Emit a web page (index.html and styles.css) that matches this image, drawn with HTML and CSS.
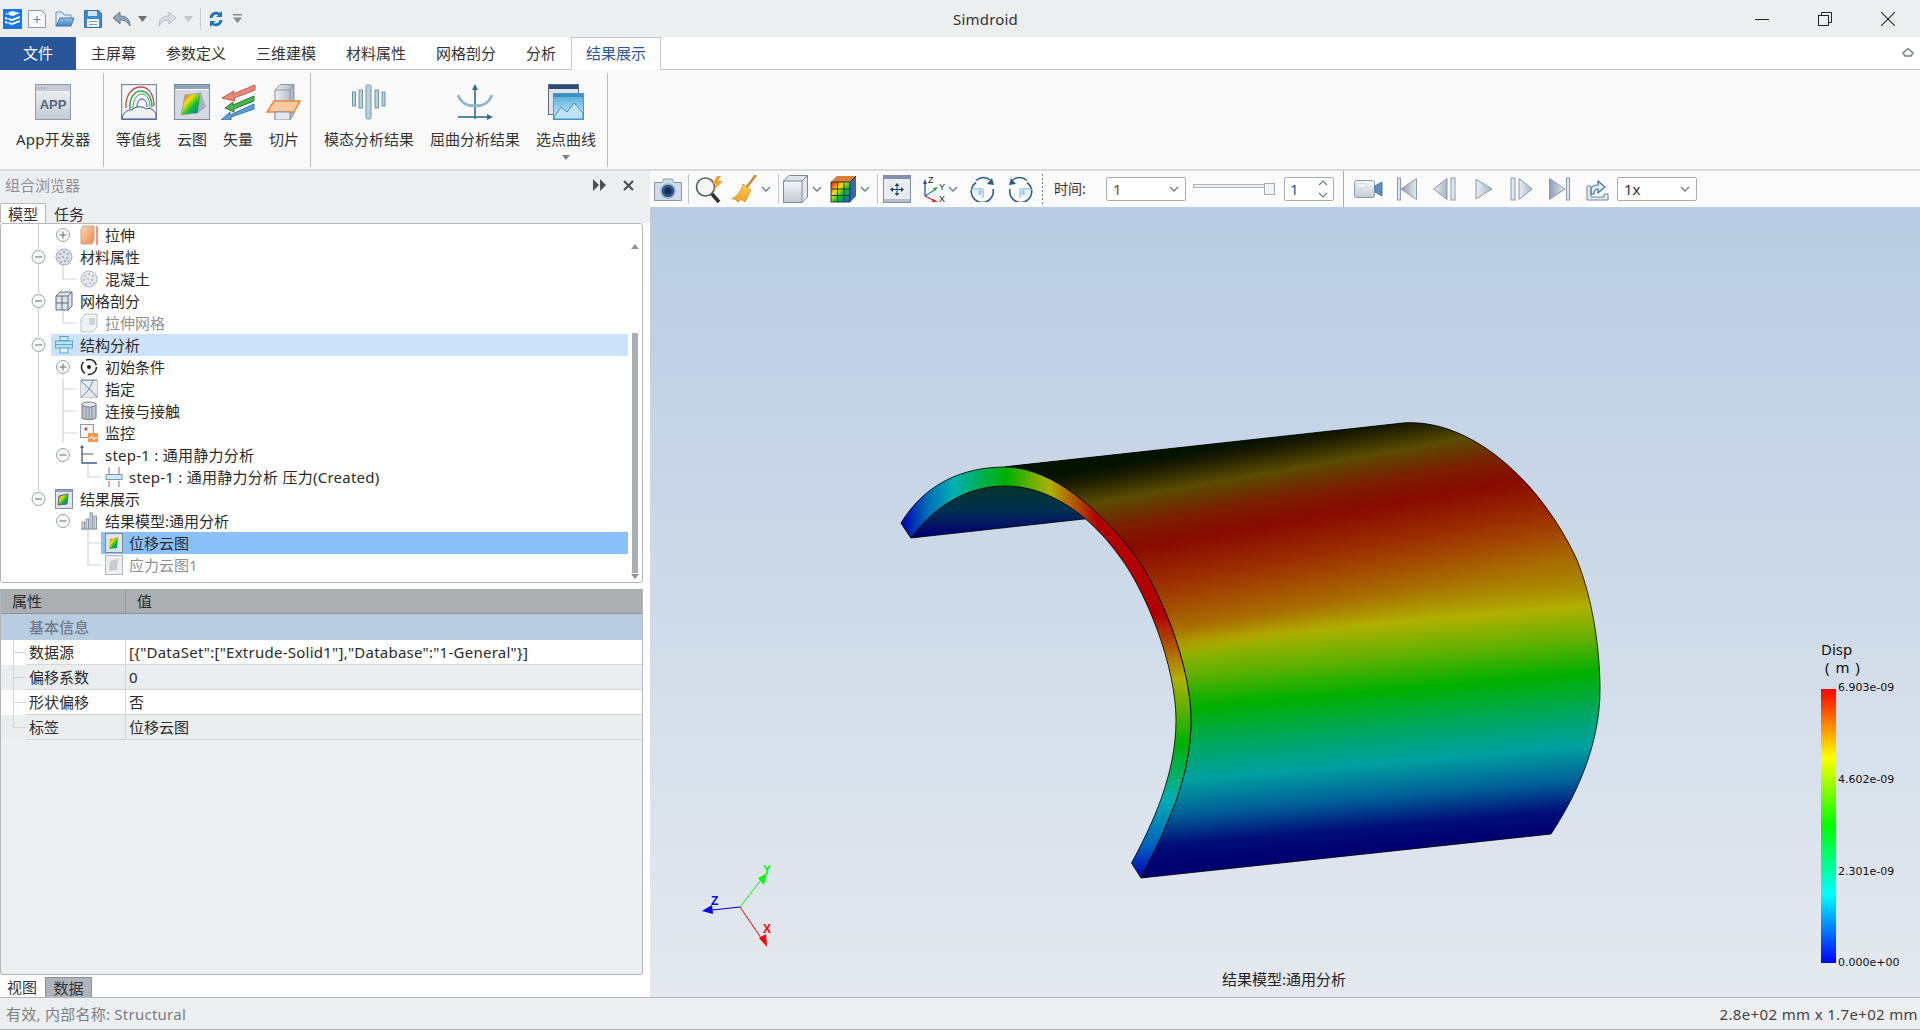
FILE: index.html
```html
<!DOCTYPE html>
<html lang="zh">
<head>
<meta charset="utf-8">
<title>Simdroid</title>
<link rel="stylesheet" href="styles.css">
</head>
<body>
<svg class="defs" width="0" height="0">
  <defs>
    <linearGradient id="gGray" x1="0" y1="0" x2="0" y2="1"><stop offset="0" stop-color="#f4f6f8"/><stop offset="1" stop-color="#c4cad3"/></linearGradient>
    <linearGradient id="gSide" x1="0" y1="0" x2="1" y2="0"><stop offset="0" stop-color="#eef0f3"/><stop offset="1" stop-color="#aab2be"/></linearGradient>
    <linearGradient id="gMedia" x1="0" y1="0" x2="1" y2="0"><stop offset="0" stop-color="#e8edf3"/><stop offset="1" stop-color="#a9b5c4"/></linearGradient>
    <linearGradient id="gMediaR" x1="0" y1="0" x2="1" y2="0"><stop offset="0" stop-color="#8f9db0"/><stop offset="1" stop-color="#e5eaf0"/></linearGradient>
    <linearGradient id="gHeat" x1="0" y1="0" x2="1" y2="1"><stop offset="0" stop-color="#f01010"/><stop offset=".35" stop-color="#f0e010"/><stop offset=".6" stop-color="#10c030"/><stop offset="1" stop-color="#1050e0"/></linearGradient>
    <linearGradient id="gOrange" x1="0" y1="0" x2="1" y2="1"><stop offset="0" stop-color="#fbd9b8"/><stop offset="1" stop-color="#e98c4a"/></linearGradient>
    <linearGradient id="gBlueWin" x1="0" y1="0" x2="0" y2="1"><stop offset="0" stop-color="#4aa8dc"/><stop offset="1" stop-color="#d8eef8"/></linearGradient>
    <linearGradient id="gFolder" x1="0" y1="0" x2="0" y2="1"><stop offset="0" stop-color="#9cc4e8"/><stop offset="1" stop-color="#3f82bd"/></linearGradient>
    <linearGradient id="gBroom" x1="0" y1="0" x2="0" y2="1"><stop offset="0" stop-color="#f9d060"/><stop offset="1" stop-color="#f0a020"/></linearGradient>
  </defs>
</svg>

<header class="titlebar">
  <div class="quick">
    <svg class="ml3" width="19" height="20" viewBox="0 0 19 20"><rect width="19" height="20" fill="#1677e8"/><path d="M2 5 9 2l8 2-7 3zM2 8l7 2 8-3v2l-8 3-7-2zM2 12l7 2 8-3v2l-8 3-7-2z" fill="#fff"/><path d="M5 4v12" stroke="#1677e8"/></svg>
    <svg class="ml6" width="18" height="18" viewBox="0 0 18 18"><path d="M.5.5h13l4 4v13H.5z" fill="#f7f8fa" stroke="#8b99ac"/><path d="M9 6v7M5.5 9.500h7" stroke="#6d7c90"/></svg>
    <svg class="ml9" width="20" height="16" viewBox="0 0 20 16"><path d="M1 15V1h6l2 3h7v3" fill="#dfe9f3" stroke="#6f93b5"/><path d="M1 15 5 7h14l-3 8z" fill="url(#gFolder)" stroke="#3c78ad"/></svg>
    <svg class="ml9" width="18" height="18" viewBox="0 0 18 18"><path d="M.5.5h14l3 3v14H.5z" fill="#3e8ccf" stroke="#2f73ae"/><rect x="4" y="1" width="9" height="5" fill="#cfe3f4"/><rect x="3" y="9" width="12" height="8" fill="#eef3f8"/><path d="M5 11.500h8M5 14.500h8" stroke="#7d9cb9"/></svg>
    <svg class="ml10" width="19" height="16" viewBox="0 0 19 16"><path d="M8 1 1 7l7 6V9c4 0 7 1 10 6 0-6-3-10-10-10z" fill="#93a3b7" stroke="#6a7b90"/></svg>
    <svg class="ml7" width="9" height="6" viewBox="0 0 9 6"><path d="M0 0h9L4.500 6z" fill="#6b6f74"/></svg>
    <svg class="ml11" width="19" height="16" viewBox="0 0 19 16"><path d="M11 1l7 6-7 6V9C7 9 4 10 1 15c0-6 3-10 10-10z" fill="#dde1e6" stroke="#b4bac2"/></svg>
    <svg class="ml7" width="9" height="6" viewBox="0 0 9 6"><path d="M0 0h9L4.500 6z" fill="#c3c6ca"/></svg>
    <i class="qsep"></i>
    <svg class="ml7" width="16" height="18" viewBox="0 0 16 18"><path d="M1.500 8C2 3 7 0 12 3l2-2v6H8l2.500-2C7.500 3.500 5 5 4.500 8z" fill="#1e73b8"/><path d="M14.500 10C14 15 9 18 4 15l-2 2v-6h6l-2.500 2c3 1.500 5.500 0 6-3z" fill="#1e73b8"/></svg>
    <svg class="ml9" width="9" height="9" viewBox="0 0 9 9"><path d="M0 0h9v1.500H0zM0 3.500h9L4.500 9z" fill="#85898e"/></svg>
  </div>
  <div class="apptitle">Simdroid</div>
  <div class="winctl">
    <svg width="14" height="14" viewBox="0 0 14 14"><path d="M0 7.500h14" stroke="#222"/></svg>
    <svg width="14" height="14" viewBox="0 0 14 14"><rect x=".5" y="3.500" width="10" height="10" fill="none" stroke="#222"/><path d="M3.500 3.500V.5h10v10h-3" fill="none" stroke="#222"/></svg>
    <svg width="14" height="14" viewBox="0 0 14 14"><path d="M0 0 14 14M14 0 0 14" stroke="#222" stroke-width="1.100"/></svg>
  </div>
</header>

<nav class="tabs">
  <div class="tab file">文件</div>
  <div class="tab">主屏幕</div>
  <div class="tab">参数定义</div>
  <div class="tab">三维建模</div>
  <div class="tab">材料属性</div>
  <div class="tab">网格剖分</div>
  <div class="tab">分析</div>
  <div class="tab active">结果展示</div>
  <svg class="collapse" width="12" height="9" viewBox="0 0 12 9"><path d="M6 .8 11 5 9 8H3L1 5z" fill="none" stroke="#7b8088" stroke-width="1.500"/></svg>
</nav>

<section class="ribbon">
  <div class="rgroup g1">
    <div class="ritem">
      <svg width="36" height="36" viewBox="0 0 36 36"><rect x=".5" y=".5" width="35" height="35" fill="url(#gGray)" stroke="#8f9aa9"/><rect x="1" y="1" width="34" height="6" fill="#c8cdd5"/><path d="M3 4h1M6 4h1M9 4h1" stroke="#667"/><text class="svgapp" x="18" y="25" text-anchor="middle">APP</text></svg>
      <span class="wide">App开发器</span>
    </div>
  </div>
  <div class="rgroup g2">
    <div class="ritem">
      <svg width="36" height="36" viewBox="0 0 36 36"><rect x=".5" y=".5" width="35" height="35" fill="#dfe3e9" stroke="#7f8b9b"/><rect x="2" y="2" width="32" height="32" fill="#f6f7f9"/><path d="M5 24C4 10 12 3 20 3c8 0 13 8 13 19" fill="none" stroke="#c0504d" stroke-width="1.300"/><path d="M9 25C8 13 14 7 20 7c6 0 11 6 11 16" fill="none" stroke="#3fa34d" stroke-width="1.500"/><path d="M12 25C12 15 16 10 21 10c5 0 8 6 8 14" fill="none" stroke="#3fa34d"/><path d="M16 24c0-6 2-9 5-9s5 3 5 8" fill="none" stroke="#3a45c8"/><path d="M1 35c0-5 5-10 10-9 2-3 10-5 14-1 4-2 8 1 10 5v5z" fill="#eef0f4" stroke="#3a4a90"/></svg>
      <span>等值线</span>
    </div>
    <div class="ritem">
      <svg width="36" height="36" viewBox="0 0 36 36"><rect x=".5" y=".5" width="35" height="35" fill="#d5dae2" stroke="#7f8b9b"/><rect x="1" y="1" width="34" height="4" fill="#8fa3bb"/><rect x="2" y="5" width="32" height="1" fill="#fff"/><path d="M11 11 27 9 24 29 7 31z" fill="url(#gHeat)" stroke="#a0a6b0"/><path d="M27 9l5 14-8 6z" fill="#aab2bd"/></svg>
      <span>云图</span>
    </div>
    <div class="ritem">
      <svg width="36" height="36" viewBox="0 0 36 36"><path d="M2 13 14 6l-1 3 22-9v5L14 13l1 3z" fill="#e8877a" stroke="#c0584c" transform="translate(0 1)"/><path d="M5 24l8-6 0 3 21-9v5L14 25l0 3z" fill="#4caf50" stroke="#2e7d32"/><path d="M1 36l9-8 0 3 24-11v5L11 33l0 3z" fill="#5a9fd8" stroke="#3a75a8"/></svg>
      <span>矢量</span>
    </div>
    <div class="ritem">
      <svg width="36" height="36" viewBox="0 0 36 36"><path d="M9 6 14 .5h14V30l-4 6H9z" fill="url(#gSide)" stroke="#8b95a3"/><path d="M9 6h15v30M24 6l4-5.500" fill="none" stroke="#8b95a3"/><path d="M8 17h26l-6 11H1z" fill="#f5c9a0" stroke="#e08840" stroke-width="1.500"/><rect x="9" y="28" width="15" height="8" fill="#e3e6eb" stroke="#8b95a3"/></svg>
      <span>切片</span>
    </div>
  </div>
  <div class="rgroup g3">
    <div class="ritem">
      <svg width="36" height="36" viewBox="0 0 36 36"><rect x="15" y="1" width="5" height="34" rx="1.500" fill="#bcd0dd" stroke="#6e95ab"/><rect x="8" y="6" width="3.500" height="18" fill="#bcd0dd" stroke="#6e95ab"/><rect x="1.500" y="8" width="3" height="14" fill="#bcd0dd" stroke="#6e95ab"/><rect x="24" y="6" width="3.500" height="18" fill="#bcd0dd" stroke="#6e95ab"/><rect x="31" y="8" width="3" height="14" fill="#bcd0dd" stroke="#6e95ab"/></svg>
      <span>模态分析结果</span>
    </div>
    <div class="ritem">
      <svg width="36" height="36" viewBox="0 0 36 36"><path d="M18 35V4" stroke="#3f7d96" stroke-width="1.800"/><path d="M18 0l-3 6h6z" fill="#2f6f8a"/><path d="M1 33h30" stroke="#3f7d96" stroke-width="1.800"/><path d="M36 33l-6-3v6z" fill="#2f6f8a"/><path d="M1 11c3 8 8 11 17 11s14-3 17-11" fill="none" stroke="#8fb6ca" stroke-width="3"/></svg>
      <span>屈曲分析结果</span>
    </div>
    <div class="ritem">
      <svg width="36" height="36" viewBox="0 0 36 36"><rect x=".5" y=".5" width="30" height="30" fill="#dfe4ea" stroke="#5d6b80"/><rect x="1" y="1" width="29" height="4" fill="#2a4a78"/><rect x="5.500" y="9.500" width="30" height="26" fill="url(#gBlueWin)" stroke="#4b9bc9"/><rect x="6" y="10" width="29" height="3" fill="#3c8fc4"/><path d="M6 33l7-10 6 5 7-9 9 10v6H6z" fill="#bfe2f3" stroke="#3c8fc4"/></svg>
      <span>选点曲线</span>
      <svg class="rcaret" width="8" height="5" viewBox="0 0 8 5"><path d="M0 0h8L4 5z" fill="#7d8288"/></svg>
    </div>
  </div>
</section>

<main class="workspace">
  <aside class="leftcol">
    <div class="dock-title">
      <span>组合浏览器</span>
      <svg class="dock-btn" width="14" height="12" viewBox="0 0 14 12"><path d="M0 0l6 6-6 6zM7 0l6 6-6 6z" fill="#4b5158"/></svg>
      <svg class="dock-btn" width="11" height="11" viewBox="0 0 11 11"><path d="M1 1l9 9M10 1l-9 9" stroke="#4b5158" stroke-width="2.200"/></svg>
    </div>
    <div class="dock-tabs">
      <div class="dtab on">模型</div>
      <div class="dtab">任务</div>
    </div>
    <div class="tree">
      <svg class="tree-lines" width="110" height="356" viewBox="0 0 110 356">
        <g class="tl">
          <path d="M37.500 0v25M37.500 40v29M37.500 84v29M37.500 128v139"/>
          <path d="M62 41v14H76M62 85v14H76M62 154v65M62 165h14M62 187h14M62 209h14"/>
          <path d="M87 239v14h13M87 305v36h13M87 319h13"/>
        </g>
        <g class="exp">
          <circle cx="62" cy="11" r="6.500"/><path d="M58.500 11h7M62 7.500v7"/>
          <circle cx="37.500" cy="33" r="6.500"/><path d="M34 33h7"/>
          <circle cx="37.500" cy="77" r="6.500"/><path d="M34 77h7"/>
          <circle cx="37.500" cy="121" r="6.500"/><path d="M34 121h7"/>
          <circle cx="62" cy="143" r="6.500"/><path d="M58.500 143h7M62 139.500v7"/>
          <circle cx="62" cy="231" r="6.500"/><path d="M58.500 231h7"/>
          <circle cx="37.500" cy="275" r="6.500"/><path d="M34 275h7"/>
          <circle cx="62" cy="297" r="6.500"/><path d="M58.500 297h7"/>
        </g>
      </svg>
      <div class="row l2"><div class="node"><svg width="18" height="20" viewBox="0 0 18 20"><path d="M1 5 3 1h11v14l-2 4H1z" fill="url(#gOrange)" stroke="#c9a184"/><path d="M17 20V1" stroke="#d03020"/></svg><span>拉伸</span></div></div>
      <div class="row l1"><div class="node"><svg width="18" height="20" viewBox="0 0 18 20"><circle cx="9" cy="10" r="8" fill="#dde1e7" stroke="#a4abb5"/><path d="M4 7h2M8 5h2M12 7h2M3 11h2M7 10h2M11 11h2M5 15h2M9 14h2M13 14h1" stroke="#aab0ba" stroke-width="2"/></svg><span>材料属性</span></div></div>
      <div class="row l2"><div class="node"><svg width="18" height="20" viewBox="0 0 18 20"><circle cx="9" cy="10" r="8" fill="#e5e8ec" stroke="#b0b6bf"/><path d="M4 7h2M8 5h2M12 7h2M3 11h2M7 10h2M11 11h2M5 15h2M9 14h2M13 14h1" stroke="#bcc2cb" stroke-width="2"/></svg><span>混凝土</span></div></div>
      <div class="row l1"><div class="node"><svg width="18" height="20" viewBox="0 0 18 20"><path d="M1 5 5 1h12v14l-4 4H1z" fill="#dfe3e8" stroke="#5f6d7e"/><path d="M1 5h12v14M13 5l4-4M1 12h12M7 5v14M5 1 5 1" fill="none" stroke="#5f6d7e"/></svg><span>网格剖分</span></div></div>
      <div class="row l2 off"><div class="node"><svg width="18" height="20" viewBox="0 0 18 20"><path d="M1 6 5 1h12v13l-4 5H1z" fill="#f1f2f4" stroke="#bcc0c6"/><path d="M9 5h6v7H9z" fill="#cfd3d8"/><path d="M1 6 13 19" stroke="#e2e4e7"/></svg><span>拉伸网格</span></div></div>
      <div class="row l1"><div class="node hover"><svg width="18" height="20" viewBox="0 0 18 20"><rect x="5" y="1.500" width="8" height="4" fill="#cfe3f4" stroke="#5aa5d0"/><rect x=".5" y="6" width="17" height="7" fill="#bfe0f3" stroke="#5aa5d0"/><path d="M1 9.500h16" stroke="#5aa5d0"/><path d="M5 13h8v5H5z" fill="#e1eff8" stroke="#5aa5d0"/></svg><span>结构分析</span></div></div>
      <div class="row l2"><div class="node"><svg width="18" height="20" viewBox="0 0 18 20"><circle cx="9" cy="10" r="7.500" fill="none" stroke="#222" stroke-width="1.500" stroke-dasharray="13 3"/><circle cx="9" cy="10" r="2" fill="#222"/></svg><span>初始条件</span></div></div>
      <div class="row l2"><div class="node"><svg width="18" height="20" viewBox="0 0 18 20"><rect x=".5" y="1.500" width="17" height="17" fill="#e6e9ee" stroke="#c2c8d0"/><path d="M1 1 17 1M1 2c5 5 11 10 16 16M1 18C7 14 11 8 13 1" fill="none" stroke="#6888a8"/></svg><span>指定</span></div></div>
      <div class="row l2"><div class="node"><svg width="18" height="20" viewBox="0 0 18 20"><path d="M2 3v14c2 2 12 2 14 0V3z" fill="#bac3cc" stroke="#6d7b8b"/><ellipse cx="9" cy="3.500" rx="7" ry="2.500" fill="#e3e7eb" stroke="#6d7b8b"/><path d="M6 6v12M9 6v13M12 6v12" stroke="#8a97a6"/></svg><span>连接与接触</span></div></div>
      <div class="row l2"><div class="node"><svg width="18" height="20" viewBox="0 0 18 20"><rect x=".5" y="1.500" width="13" height="13" fill="#f4f5f7" stroke="#8f99a6"/><path d="M4 6h4M6 4v4" stroke="#c04030"/><rect x="8" y="10" width="10" height="9" fill="#f29a4a"/><path d="M9 15h2l1-2 2 4 1-2h2" fill="none" stroke="#fff"/></svg><span>监控</span></div></div>
      <div class="row l2"><div class="node"><svg width="18" height="20" viewBox="0 0 18 20"><path d="M2 1v17h15" fill="none" stroke="#3f5f90" stroke-width="1.300"/><path d="M2 9h11" stroke="#3f5f90"/><path d="M2 0 0 3h4z" fill="#3f5f90"/></svg><span class="wide">step-1 : 通用静力分析</span></div></div>
      <div class="row l3"><div class="node"><svg width="18" height="20" viewBox="0 0 18 20"><path d="M4 0v7M14 0v7M4 14v6M14 14v6" stroke="#c65a45"/><rect x="1" y="7.500" width="16" height="5" fill="#d7e8f5" stroke="#7098bd"/></svg><span class="wide">step-1 : 通用静力分析 压力(Created)</span></div></div>
      <div class="row l1"><div class="node"><svg width="18" height="20" viewBox="0 0 18 20"><rect x=".5" y=".5" width="17" height="19" fill="#e1e4e9" stroke="#7f8b9b"/><rect x="1" y="1" width="16" height="2" fill="#8fa3bb"/><path d="M4 7 13 5 12 15 3 16z" fill="url(#gHeat)" stroke="#666"/></svg><span>结果展示</span></div></div>
      <div class="row l2"><div class="node"><svg width="18" height="20" viewBox="0 0 18 20"><path d="M1 18h16" stroke="#8b97a6"/><rect x="2" y="11" width="2.500" height="7" fill="#cdd6df" stroke="#8b97a6"/><rect x="6" y="8" width="2.500" height="10" fill="#cdd6df" stroke="#8b97a6"/><rect x="10" y="2" width="2.500" height="16" fill="#cdd6df" stroke="#8b97a6"/><rect x="14" y="5" width="2.500" height="13" fill="#cdd6df" stroke="#8b97a6"/></svg><span>结果模型:通用分析</span></div></div>
      <div class="row l3"><div class="node sel"><svg width="18" height="20" viewBox="0 0 18 20"><rect x=".5" y=".5" width="17" height="19" fill="#dfe3e8" stroke="#7f8b9b"/><path d="M5 6 13 4l-1 11-8 1z" fill="url(#gHeat)"/></svg><span>位移云图</span></div></div>
      <div class="row l3 off"><div class="node"><svg width="18" height="20" viewBox="0 0 18 20"><rect x=".5" y=".5" width="17" height="19" fill="#eceef0" stroke="#b2b7bd"/><path d="M5 6 13 4l-1 11-8 1z" fill="#c8ccd2"/></svg><span>应力云图1</span></div></div>
      <div class="sb-up"></div>
      <div class="sb-thumb"></div>
      <div class="sb-down"></div>
    </div>

    <div class="props">
      <div class="prow phead"><div class="pn">属性</div><div class="pv">值</div></div>
      <div class="pgroup">基本信息</div>
      <div class="prow pitem"><i class="twig"></i><div class="pn">数据源</div><div class="pv wide">[{"DataSet":["Extrude-Solid1"],"Database":"1-General"}]</div></div>
      <div class="prow pitem alt"><i class="twig"></i><div class="pn">偏移系数</div><div class="pv">0</div></div>
      <div class="prow pitem"><i class="twig"></i><div class="pn">形状偏移</div><div class="pv">否</div></div>
      <div class="prow pitem alt"><i class="twig"></i><div class="pn">标签</div><div class="pv">位移云图</div></div>
    </div>
    <div class="btabs">
      <div class="btab">视图</div>
      <div class="btab on">数据</div>
    </div>
  </aside>

  <section class="rightcol">
    <div class="toolbar">
      <svg class="ml4" width="28" height="23" viewBox="0 0 28 23"><path d="M.5 4.500H8L10 1h8l2 3.500h7.500v18H.5z" fill="#cfdbe8" stroke="#8598ae"/><circle cx="14" cy="13" r="7" fill="#2e558c" stroke="#9db1c8" stroke-width="1.500"/><circle cx="14" cy="13" r="3.500" fill="#162f57"/></svg>
      <i class="sep ml6"></i>
      <svg class="ml6" width="29" height="29" viewBox="0 0 29 29"><circle cx="10.500" cy="12" r="9" fill="#f4f6f8" stroke="#5a5f66" stroke-width="1.600"/><path d="M17 19l7 8" stroke="#2b2e33" stroke-width="3.500"/><path d="M22 1l-5 8h4l-2 6 9-9h-5l3-5z" fill="#f0a030"/></svg>
      <svg class="ml8" width="25" height="28" viewBox="0 0 25 28"><path d="M24 0 14 13" stroke="#c98a30" stroke-width="2.500"/><path d="M11 9l8 6-6 12-4-3-3 3-3-3-3 0C5 21 9 16 11 9z" fill="url(#gBroom)" stroke="#d08a20" stroke-width=".7"/></svg>
      <svg class="ml4 chev" width="10" height="6" viewBox="0 0 10 6"><path d="M1 1l4 4 4-4"/></svg>
      <i class="sep ml7"></i>
      <svg class="ml4" width="25" height="28" viewBox="0 0 25 28"><path d="M.5 6 6 .5h18.500V22L19 27.500H.5z" fill="#e1e4e9" stroke="#7a8899"/><path d="M1 6h18v21H1z" fill="url(#gGray)"/><path d="M.5 6H19v21.500M19 6l5.500-5.500" fill="none" stroke="#7a8899"/></svg>
      <svg class="ml4 chev" width="10" height="6" viewBox="0 0 10 6"><path d="M1 1l4 4 4-4"/></svg>
      <svg class="ml8" width="27" height="28" viewBox="0 0 27 28"><path d="M1 7 7 1h19v20l-6 6H1z" fill="#7a90aa"/><path d="M1 7h19v20H1z" fill="url(#gHeat)"/><path d="M20 7l6-6v20l-6 6z" fill="#3568b8"/><path d="M1 7 7 1h19l-6 6z" fill="#d9803a"/><path d="M7.500 7v20M14 7v20M1 14h19M1 20.500h19M1 7h19v20H1zM20 7l6-6" fill="none" stroke="#1d2b3c" stroke-width=".9"/></svg>
      <svg class="ml3 chev" width="10" height="6" viewBox="0 0 10 6"><path d="M1 1l4 4 4-4"/></svg>
      <i class="sep ml7"></i>
      <svg class="ml5" width="28" height="28" viewBox="0 0 28 28"><rect x=".5" y=".5" width="27" height="27" fill="#e9ecf0" stroke="#7f8ea2"/><rect x="1" y="1" width="26" height="3" fill="#7f92ab"/><rect x="1" y="24" width="26" height="3" fill="#b5bfcc"/><path d="M14 8l-2.500 3h5zM14 21l-2.500-3h5zM7 14.500l3-2.500v5zM21 14.500l-3-2.500v5z" fill="#25415f"/><path d="M14 10v9M9 14.500h10" stroke="#25415f"/></svg>
      <svg class="ml12" width="22" height="28" viewBox="0 0 22 28"><path d="M2 21V7" stroke="#2350c0" stroke-width="1.300"/><path d="M2 4 0 9h4z" fill="#2350c0"/><path d="M2 21 13 14" stroke="#2a9a50" stroke-width="1.300"/><path d="M15 12l-5 1 2 3z" fill="#2a9a50"/><path d="M2 21l10 5" stroke="#e02020" stroke-width="1.300"/><path d="M15 27l-5-3-1 3z" fill="#e02020"/><text class="svgax" x="5" y="8">Z</text><text class="svgax" x="16" y="15">Y</text><text class="svgax" x="16" y="27">X</text></svg>
      <svg class="ml3 chev" width="10" height="6" viewBox="0 0 10 6"><path d="M1 1l4 4 4-4"/></svg>
      <svg class="ml12" width="25" height="26" viewBox="0 0 25 26"><path d="M6 6.500A11 11 0 1 0 23 13" fill="none" stroke="#2e5f8a" stroke-width="1.600"/><path d="M6 4.500C11 0 17 1 20 4" fill="none" stroke="#2e5f8a" stroke-width="1.600"/><path d="M24 9l-7-1 5-6z" fill="#2b5a86"/><path d="M1 13h12v9" fill="none" stroke="#5fa8dc"/><path d="M13 13v9c-6-1-10-4-12-9z" fill="#cfe7f7" opacity=".4"/><path d="M9 15h2v3H9z" fill="none" stroke="#5fa8dc" stroke-width=".8"/></svg>
      <svg class="ml13" width="25" height="26" viewBox="0 0 25 26"><path d="M19 6.500A11 11 0 1 1 2 13" fill="none" stroke="#2e5f8a" stroke-width="1.600"/><path d="M19 4.500C14 0 8 1 5 4" fill="none" stroke="#2e5f8a" stroke-width="1.600"/><path d="M1 9l7-1-5-6z" fill="#2b5a86"/><path d="M24 13H12v9" fill="none" stroke="#5fa8dc"/><path d="M12 13v9c6-1 10-4 12-9z" fill="#cfe7f7" opacity=".4"/><path d="M14 15h2v3h-2z" fill="none" stroke="#5fa8dc" stroke-width=".8"/></svg>
      <i class="dotsep ml9"></i>
      <span class="tlabel ml11">时间:</span>
      <div class="combo c-time ml18"><span class="v-o">1</span><svg class="chev" width="10" height="6" viewBox="0 0 10 6"><path d="M1 1l4 4 4-4"/></svg></div>
      <div class="slider ml7"><i class="track"></i><i class="handle"></i></div>
      <div class="spin ml9"><span class="v-b">1</span><svg width="10" height="18" viewBox="0 0 10 18"><path class="chevp" d="M1 5l4-4 4 4M1 13l4 4 4-4"/></svg></div>
      <i class="sep tall ml9"></i>
      <svg class="ml10" width="29" height="18" viewBox="0 0 29 18"><rect x=".5" y=".5" width="20" height="17" rx="2" fill="url(#gGray)" stroke="#8897a9"/><rect x="3" y="4" width="9" height="3" fill="#fff" stroke="#b5bdc8" stroke-width=".5"/><path d="M21 6l7-4v14l-7-4z" fill="#5d8fb9" stroke="#4a7aa3"/></svg>
      <svg class="ml14" width="20" height="24" viewBox="0 0 20 24"><rect x=".5" y="1" width="3" height="22" fill="#dfe4ea" stroke="#8a99ac"/><path d="M19.500 1.500v21L4 12z" fill="url(#gMediaR)" stroke="#8a99ac"/></svg>
      <svg class="ml16" width="23" height="24" viewBox="0 0 23 24"><path d="M14 1.500v21L.7 12z" fill="url(#gMedia)" stroke="#8a99ac"/><rect x="18" y="1" width="4" height="22" fill="#e3e8ee" stroke="#8a99ac"/></svg>
      <svg class="ml19" width="18" height="24" viewBox="0 0 18 24"><path d="M1 2v20l16-10z" fill="url(#gMedia)" stroke="#8a99ac"/></svg>
      <svg class="ml17" width="23" height="24" viewBox="0 0 23 24"><rect x="1" y="1" width="4" height="22" fill="#e3e8ee" stroke="#8a99ac"/><path d="M9 1.500v21L22.300 12z" fill="url(#gMedia)" stroke="#8a99ac"/></svg>
      <svg class="ml16" width="21" height="24" viewBox="0 0 21 24"><path d="M.5 1.500v21L16 12z" fill="url(#gMediaR)" stroke="#8a99ac"/><rect x="17.500" y="1" width="3" height="22" fill="#dfe4ea" stroke="#8a99ac"/></svg>
      <svg class="ml16" width="23" height="24" viewBox="0 0 23 24"><path d="M1 9v14h21v-6h-4v3H5V9z" fill="#e2e9f0" stroke="#6b88a6"/><path d="M5 17v-4c0-3 3-5 7-5V4l7 6-7 6v-4c-2 0-4 1-4 5z" fill="#dfe9f2" stroke="#3f7196" stroke-width="1.200"/></svg>
      <div class="combo c-speed ml8"><span>1x</span><svg class="chev" width="10" height="6" viewBox="0 0 10 6"><path d="M1 1l4 4 4-4"/></svg></div>
    </div>

    <div class="viewport">
      <svg class="scene" width="1270" height="789" viewBox="650 207 1270 789">
        <defs>
          <linearGradient id="gBody" gradientUnits="userSpaceOnUse" x1="1320" y1="430" x2="1356" y2="850">
            <stop offset="0" stop-color="#041200"/>
            <stop offset=".07" stop-color="#4c4800"/>
            <stop offset=".13" stop-color="#5e4a00"/>
            <stop offset=".2" stop-color="#880a00"/>
            <stop offset=".3" stop-color="#9a2c00"/>
            <stop offset=".38" stop-color="#a46800"/>
            <stop offset=".47" stop-color="#b0b000"/>
            <stop offset=".55" stop-color="#60b000"/>
            <stop offset=".63" stop-color="#00b000"/>
            <stop offset=".72" stop-color="#00a860"/>
            <stop offset=".8" stop-color="#00a0a0"/>
            <stop offset=".88" stop-color="#006098"/>
            <stop offset=".95" stop-color="#000e78"/>
            <stop offset="1" stop-color="#000070"/>
          </linearGradient>
          <linearGradient id="gBodyTop" gradientUnits="userSpaceOnUse" x1="1340" y1="425" x2="1375" y2="625">
            <stop offset="0" stop-color="#041200"/>
            <stop offset=".05" stop-color="#1a1a00"/>
            <stop offset=".17" stop-color="#5a4c00"/>
            <stop offset=".3" stop-color="#7a2000"/>
            <stop offset=".42" stop-color="#880a00"/>
            <stop offset=".6" stop-color="#9a2c00"/>
            <stop offset=".72" stop-color="#a34a00"/>
            <stop offset=".85" stop-color="#a86e00"/>
            <stop offset="1" stop-color="#b0a000" stop-opacity="0"/>
          </linearGradient>
          <linearGradient id="gRingTop" gradientUnits="userSpaceOnUse" x1="901" y1="0" x2="1130" y2="0">
            <stop offset="0" stop-color="#0000b0"/>
            <stop offset=".12" stop-color="#0070b8"/>
            <stop offset=".23" stop-color="#00b0b0"/>
            <stop offset=".46" stop-color="#00b000"/>
            <stop offset=".65" stop-color="#b0b000"/>
            <stop offset=".86" stop-color="#b00000"/>
            <stop offset="1" stop-color="#b00000"/>
          </linearGradient>
          <linearGradient id="gRingLow" gradientUnits="userSpaceOnUse" x1="0" y1="557" x2="0" y2="878">
            <stop offset="0" stop-color="#b00000"/>
            <stop offset=".18" stop-color="#b00000"/>
            <stop offset=".38" stop-color="#b0b000"/>
            <stop offset=".58" stop-color="#00b000"/>
            <stop offset=".75" stop-color="#00b0b0"/>
            <stop offset=".9" stop-color="#0060c0"/>
            <stop offset="1" stop-color="#0000b0"/>
          </linearGradient>
          <linearGradient id="gBack" gradientUnits="userSpaceOnUse" x1="0" y1="486" x2="0" y2="535">
            <stop offset="0" stop-color="#06352a"/>
            <stop offset=".5" stop-color="#003050"/>
            <stop offset="1" stop-color="#000070"/>
          </linearGradient>
          <linearGradient id="gLegend" x1="0" y1="0" x2="0" y2="1">
            <stop offset="0" stop-color="#ff0000"/>
            <stop offset=".25" stop-color="#ffff00"/>
            <stop offset=".5" stop-color="#00ff00"/>
            <stop offset=".75" stop-color="#00ffff"/>
            <stop offset="1" stop-color="#0000ff"/>
          </linearGradient>
        </defs>
        <path d="M911 538 C935 505 968 486 1005 486 C1042 486 1070 500 1093 518 Z" fill="url(#gBack)" stroke="#000" stroke-width=".8"/>
        <path d="M1012 466 L1403 423 C1470 418 1540 480 1577 560 C1593 600 1600 650 1600 690 C1600 740 1580 790 1551 834 L1141 878 C1165 830 1191 780 1191 720 C1191 665 1160 590 1136 557 C1105 515 1054 467 1005 467 Z" fill="url(#gBody)"/>
        <path d="M1012 466 L1403 423 C1470 418 1540 480 1577 560 C1593 600 1600 650 1600 690 C1600 740 1580 790 1551 834 L1141 878 C1165 830 1191 780 1191 720 C1191 665 1160 590 1136 557 C1105 515 1054 467 1005 467 Z" fill="url(#gBodyTop)" stroke="#000" stroke-width=".8"/>
        <path d="M901 523 C925 483 964 467 1005 467 C1054 467 1105 515 1136 557 L1120 557 C1090 515 1049 486 1005 486 C968 486 935 505 911 538 Z" fill="url(#gRingTop)"/>
        <path d="M1136 557 C1160 590 1191 665 1191 720 C1191 780 1165 830 1141 878 L1131.500 863 C1152 825 1176 775 1176 720 C1176 665 1145 590 1120 557 Z" fill="url(#gRingLow)"/>
        <path d="M901 523 C925 483 964 467 1005 467 C1054 467 1105 515 1136 557 C1160 590 1191 665 1191 720 C1191 780 1165 830 1141 878 L1131.500 863 C1152 825 1176 775 1176 720 C1176 665 1145 590 1120 557 C1090 515 1049 486 1005 486 C968 486 935 505 911 538 Z" fill="none" stroke="#000" stroke-width=".8"/>
        <path d="M901 523 L911 538" stroke="#000" stroke-width=".6"/>

        <g class="triad">
          <path d="M740 907 712 910" stroke="#0000ff" stroke-width="1.200"/>
          <path d="M702 911 712 905 713 914z" fill="#0000ff"/>
          <path d="M740 907 761 880" stroke="#00ff00" stroke-width="1"/>
          <path d="M767 873 758 878 764 885z" fill="#00ff00"/>
          <path d="M740 907 761 938" stroke="#ff0000" stroke-width="1"/>
          <path d="M767 947 759 938 766 934z" fill="#ff0000"/>
          <text class="ax zc" x="711" y="905">Z</text>
          <text class="ax yc" x="763" y="874">Y</text>
          <text class="ax xc" x="763" y="933">X</text>
        </g>

        <text class="lg-title" x="1821" y="655">Disp</text>
        <text class="lg-title lg-unit" x="1825" y="673">( m )</text>
        <rect x="1821" y="689" width="15" height="274" fill="url(#gLegend)"/>
        <text class="lg" x="1838" y="691">6.903e-09</text>
        <text class="lg" x="1838" y="783">4.602e-09</text>
        <text class="lg" x="1838" y="875">2.301e-09</text>
        <text class="lg" x="1838" y="966">0.000e+00</text>
        <text class="vp-cap" x="1284" y="985" text-anchor="middle">结果模型:通用分析</text>
      </svg>
    </div>
  </section>
</main>

<footer class="status">
  <span class="wide">有效, 内部名称: Structural</span>
  <span class="dim">2.8e+02 mm x 1.7e+02 mm</span>
</footer>
</body>
</html>
```

FILE: styles.css
```css
* { box-sizing: border-box; }
html, body { margin: 0; padding: 0; }
body {
  width: 1920px;
  height: 1030px;
  overflow: hidden;
  display: flex;
  flex-direction: column;
  background: #fff;
  color: #2a2a2a;
  font: 15px/20px "Noto Sans", "Noto Sans CJK SC", sans-serif;
}
svg { display: block; flex: none; }
.defs { position: absolute; }
i { display: block; flex: none; }
.wide { letter-spacing: .25px; }

.ml3 { margin-left: 3px; } .ml4 { margin-left: 4px; } .ml5 { margin-left: 5px; }
.ml6 { margin-left: 6px; } .ml7 { margin-left: 7px; } .ml8 { margin-left: 8px; }
.ml9 { margin-left: 9px; } .ml10 { margin-left: 10px; } .ml11 { margin-left: 11px; }
.ml12 { margin-left: 12px; } .ml13 { margin-left: 13px; } .ml14 { margin-left: 14px; }
.ml16 { margin-left: 16px; } .ml17 { margin-left: 17px; } .ml18 { margin-left: 18px; }
.ml19 { margin-left: 19px; }

/* title bar */
.titlebar { flex: none; height: 37px; display: flex; align-items: center; background: #eceef0; }
.quick { flex: 0 0 953px; display: flex; align-items: center; }
.qsep { width: 1px; height: 22px; margin-left: 7px; background: #c9ccd0; }
.apptitle { color: #333; letter-spacing: .2px; }
.winctl { margin-left: auto; display: flex; align-items: center; gap: 49px; padding-right: 25px; }

/* ribbon tabs */
.tabs { flex: none; height: 33px; display: flex; position: relative; background: #fff; border-bottom: 1px solid #c8cbce; }
.tab { padding: 6px 15px 0; height: 33px; color: #333; flex: none; }
.tab.file { width: 76px; padding: 6px 0 0; text-align: center; background: #2a5699; color: #fff; }
.tab.active { color: #2a5699; background: #fff; border: 1px solid #c8cbce; border-bottom: 0; padding: 5px 14px 0; height: 33px; }
.collapse { position: absolute; right: 6px; top: 11px; }

.ribbon { flex: none; height: 101px; display: flex; background: #fafafa; border-bottom: 2px solid #d8dadc; padding-top: 3px; }
.rgroup { display: flex; gap: 16px; height: 94px; border-right: 1px solid #b9bcc0; padding-top: 11px; }
.g1 { width: 104px; padding-left: 16px; }
.g2 { width: 207px; padding-left: 12px; }
.g3 { width: 297px; padding-left: 13px; }
.ritem { display: flex; flex-direction: column; align-items: center; color: #333; position: relative; }
.ritem > svg:first-child { margin: 0 -3px; }
.ritem span { margin-top: 9px; white-space: nowrap; }
.rcaret { margin-top: 6px; }
.svgapp { font: bold 13px "Liberation Sans", sans-serif; fill: #55657a; }

/* workspace */
.workspace { flex: none; height: 826px; display: flex; }
.leftcol { flex: 0 0 650px; display: flex; flex-direction: column; background: #fff; }
.dock-title { flex: none; height: 32px; display: flex; align-items: center; background: #eceef0; padding: 0 16px 4px 5px; color: #8b9097; }
.dock-title span { margin-right: auto; }
.dock-btn { margin-left: 15px; }
.dock-title .dock-btn:first-of-type { position: relative; left: 1px; }
.dock-title .dock-btn:last-child { margin-left: 17px; }
.dock-tabs { flex: none; height: 20px; display: flex; background: #eceef0; align-items: flex-end; }
.dtab { height: 20px; padding: 2px 8px 0; color: #333; line-height: 19px; }
.dtab.on { background: #fff; border: 1px solid #b8bbbf; border-bottom: 0; width: 46px; padding: 1px 0 0 7px; border-radius: 2px 2px 0 0; }

.tree { flex: none; position: relative; width: 643px; height: 360px; border: 1px solid #b4b7bb; border-radius: 3px; background: #fff; }
.tree-lines { position: absolute; left: 0; top: 0; }
.tl path { fill: none; stroke: #d0d3d6; stroke-width: 1.200; }
.exp circle { fill: #f6f7f8; stroke: #9ca1a7; }
.exp path { fill: none; stroke: #6a6e74; }
.row { position: relative; width: 627px; height: 22px; display: flex; }
.l1 { padding-left: 50px; }
.l2 { padding-left: 75px; }
.l3 { padding-left: 100px; }
.node { flex: 1; display: flex; align-items: center; gap: 7px; padding-left: 4px; white-space: nowrap; }
.l3 .node { gap: 6px; }
.node.hover { background: #cce2fb; }
.node.sel { background: #8bc1fb; }
.off .node { color: #8d9196; }
.sb-thumb { position: absolute; left: 631px; top: 109px; width: 6px; height: 240px; background: #a9afb3; }
.sb-up, .sb-down { position: absolute; left: 630px; width: 0; height: 0; border-left: 4px solid transparent; border-right: 4px solid transparent; }
.sb-up { top: 20px; border-bottom: 5px solid #8d939a; }
.sb-down { top: 350px; border-top: 5px solid #8d939a; }

/* properties */
.props { flex: none; width: 643px; height: 386px; margin-top: 6px; background: #eceef0; border: 1px solid #b4b7bb; border-top: 0; border-radius: 0 0 3px 3px; }
.prow { display: flex; }
.phead { height: 25px; background: #abafb2; border-bottom: 1px solid #8f9396; line-height: 25px; color: #2a2a2a; }
.phead .pn { width: 125px; padding-left: 11px; border-right: 1px solid #93979b; }
.phead .pv { padding-left: 11px; }
.pgroup { height: 26px; padding-left: 28px; line-height: 27px; background: #bacde0; color: #6d7b8b; font-weight: 500; }
.pitem { position: relative; height: 25px; line-height: 25px; background: #fff; }
.pitem.alt { background: #ecedef; }
.twig { width: 25px; flex: none; position: relative; }
.twig::before { content: ""; position: absolute; left: 12px; top: 0; width: 1px; height: 100%; background: #d4d6d9; }
.twig::after { content: ""; position: absolute; left: 12px; top: 12px; width: 13px; height: 1px; background: #d4d6d9; }
.pitem:last-child .twig::before { height: 13px; }
.pn { width: 100px; flex: none; padding-left: 3px; border-bottom: 1px solid #d4d6d9; border-right: 1px solid #d4d6d9; }
.pv { flex: 1; padding-left: 3px; border-bottom: 1px solid #d4d6d9; white-space: nowrap; }
.phead .pn, .phead .pv { border-bottom: 0; }

.btabs { flex: none; height: 22px; display: flex; align-items: flex-end; padding-left: 7px; }
.btab { height: 20px; line-height: 21px; color: #333; }
.btab.on { margin-left: 8px; width: 47px; text-align: center; background: #b0b4b8; border: 1px solid #8e9296; border-bottom: 0; }

/* right */
.rightcol { flex: 1; display: flex; flex-direction: column; min-width: 0; }
.toolbar { flex: none; height: 36px; display: flex; align-items: center; background: #fbfbfb; color: #333; }
.sep { width: 1px; height: 30px; background: #c4c7ca; }
.sep.tall { height: 36px; background: #a9acaf; }
.dotsep { width: 1px; height: 30px; background: repeating-linear-gradient(#7b7f84 0 2px, transparent 2px 4px); }
.chev { fill: none; stroke: #6c7c8c; stroke-width: 1.300; }
.chevp { fill: none; stroke: #6c7c8c; stroke-width: 1.200; }
.tlabel { width: 34px; white-space: nowrap; font-size: 14px; }
.combo { height: 24px; width: 80px; display: flex; align-items: center; justify-content: space-between; padding: 0 6px; background: #fff; border: 1px solid #a9adb2; border-radius: 2px; }
.v-o { color: #8a4a10; }
.v-b { color: #1a5a9a; }
.slider { position: relative; width: 82px; height: 14px; }
.track { position: absolute; left: 0; right: 0; top: 2px; height: 4px; background: #eceef0; border: 1px solid #b3b7bb; }
.handle { position: absolute; right: 0; top: 1px; width: 11px; height: 12px; background: #f1f2f4; border: 1px solid #a9adb2; }
.spin { width: 50px; height: 24px; display: flex; align-items: center; justify-content: space-between; padding: 0 5px; background: #fff; border: 1px solid #a9adb2; border-radius: 2px; }
.svgax { font: 9px "Liberation Sans", sans-serif; fill: #222; }

.viewport { flex: 1; background: linear-gradient(#b9cce3, #e5e9ef); border-top: 1px solid #bcd0e4; }
.scene { margin-top: -1px; }
.ax { font: bold 12px "Liberation Sans", sans-serif; }
.zc { fill: #0000ff; } .yc { fill: #00ff00; } .xc { fill: #ff0000; }
.lg { font: 11px "DejaVu Sans", sans-serif; fill: #111; }
.lg-title { font: 15px "Noto Sans", sans-serif; fill: #111; }
.lg-unit { letter-spacing: 1px; }
.vp-cap { font: 15px "Noto Sans", "Noto Sans CJK SC", sans-serif; fill: #222; }

/* status */
.status { flex: none; height: 33px; display: flex; justify-content: space-between; align-items: center; padding: 0 2px 0 6px; background: #eceef0; border-top: 1px solid #b4b7bb; border-bottom: 1px solid #b4b7bb; color: #7c7f83; }
.status .dim { color: #444; letter-spacing: .35px; }
```
